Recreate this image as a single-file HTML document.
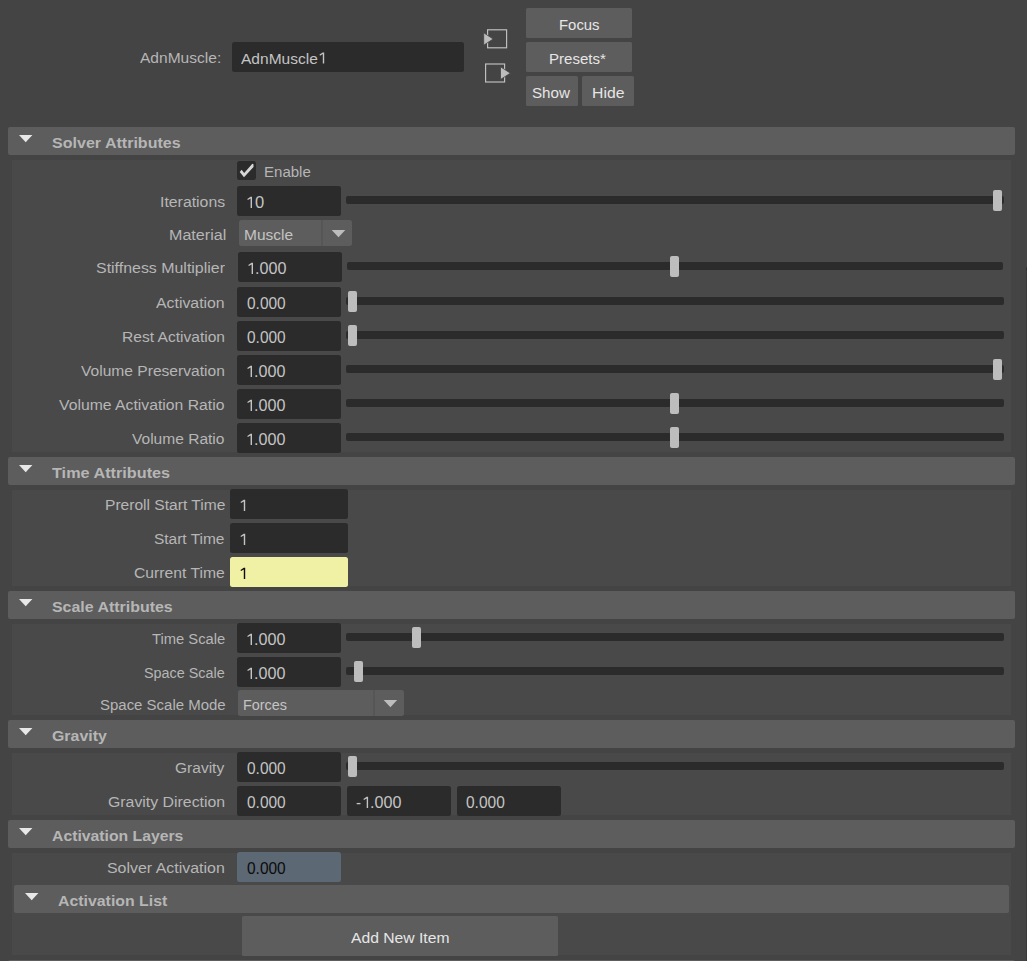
<!DOCTYPE html>
<html><head><meta charset="utf-8"><title>AdnMuscle Attribute Editor</title>
<style>
html,body{margin:0;padding:0;}
body{width:1027px;height:961px;background:#444444;overflow:hidden;position:relative;
font-family:"Liberation Sans",sans-serif;font-size:15.45px;line-height:20px;}
#r{position:absolute;left:0;top:0;width:1027px;height:961px;overflow:hidden;}
#r div,#r svg,#r span{position:absolute;}
#r span{white-space:nowrap;transform-origin:0 0;display:block;}
</style></head><body><div id="r">
<span style="left:140.20px;top:48.00px;color:#b6b6b6;transform:scaleX(1.0072)">AdnMuscle:</span>
<div style="left:232px;top:42px;width:232px;height:30px;background:#2b2b2b;border-radius:2.5px;"></div>
<span style="left:241.41px;top:49.00px;color:#c4c4c4;transform:scaleX(1.0061)">AdnMuscle</span>
<svg style="left:0;top:0" width="1027" height="961"><path d="M322.75 52.40H324.20V63.60H322.80V54.00L320.00 55.70L319.50 54.60Z" fill="#c4c4c4"/></svg>
<svg style="left:0;top:0" width="1027" height="961">
<rect x="487.6" y="29.8" width="19" height="18" fill="none" stroke="#c2c2c2" stroke-width="1.15"/>
<path d="M483.7 32.8V45.2L493.2 39Z" fill="#bdbdbd" stroke="#444444" stroke-width="0.8"/>
<rect x="485.6" y="64" width="19" height="18" fill="none" stroke="#c2c2c2" stroke-width="1.15"/>
<path d="M500.5 66.8V79.5L510.4 73.15Z" fill="#bdbdbd" stroke="#444444" stroke-width="0.8"/>
</svg>
<div style="left:526px;top:8px;width:106px;height:30px;background:#5d5d5d;border-radius:1.5px;"></div>
<span style="left:558.86px;top:15.00px;color:#e6e6e6;transform:scaleX(0.9645)">Focus</span>
<div style="left:526px;top:42px;width:106px;height:30px;background:#5d5d5d;border-radius:1.5px;"></div>
<span style="left:549.09px;top:49.00px;color:#e6e6e6;transform:scaleX(0.9750)">Presets*</span>
<div style="left:526px;top:76px;width:52px;height:30px;background:#5d5d5d;border-radius:1.5px;"></div>
<span style="left:532.32px;top:83.00px;color:#e6e6e6;transform:scaleX(0.9813)">Show</span>
<div style="left:582px;top:76px;width:52px;height:30px;background:#5d5d5d;border-radius:1.5px;"></div>
<span style="left:591.99px;top:83.00px;color:#e6e6e6;transform:scaleX(1.0206)">Hide</span>
<div style="left:1026px;top:267px;width:1px;height:694px;background:#393939;"></div>
<div style="left:1026px;top:268px;width:1px;height:2px;background:#303030;"></div>
<div style="left:8px;top:127px;width:1007px;height:28px;background:#5d5d5d;border-radius:2px;"></div>
<svg style="left:0;top:0" width="1027" height="961"><path d="M19 135H32.4L25.7 142.2Z" fill="#e8e8e8"/></svg>
<span style="left:52.16px;top:133.00px;color:#b6b6b6;font-weight:bold;transform:scaleX(1.0391)">Solver Attributes</span>
<div style="left:12px;top:160px;width:999px;height:292px;background:#494949;"></div>
<div style="left:237px;top:161px;width:19px;height:19px;background:#2b2b2b;border-radius:2.5px;"></div>
<svg style="left:0;top:0" width="1027" height="961"><path d="M239.7 172L241.6 169.7L244.2 173.1L252.3 163.7L253.5 164.3L253.5 166.9L244 177.3Z" fill="#d6d6d6"/></svg>
<span style="left:264.00px;top:162.00px;color:#b6b6b6;transform:scaleX(0.9733)">Enable</span>
<span style="left:159.95px;top:192.00px;color:#b6b6b6;transform:scaleX(1.0257)">Iterations</span>
<div style="left:237px;top:186px;width:104px;height:30px;background:#2b2b2b;border-radius:2.5px;"></div>
<svg style="left:0;top:0" width="1027" height="961"><path d="M250.55 196.80H252.00V208.00H250.60V198.40L247.80 200.10L247.30 199.00Z" fill="#c4c4c4"/></svg>
<span style="left:254.70px;top:192.00px;color:#c4c4c4;font-size:16.2px;transform:scaleX(1.0204)">0</span>
<div style="left:346px;top:196px;width:658px;height:8px;background:#2b2b2b;border-radius:2px;"></div>
<div style="left:993px;top:190px;width:9px;height:21px;background:#bdbdbd;border-radius:2px;"></div>
<span style="left:168.84px;top:225.00px;color:#b6b6b6;transform:scaleX(1.0428)">Material</span>
<div style="left:239px;top:220px;width:113px;height:26px;background:#5d5d5d;border-radius:2.5px;"></div>
<div style="left:321px;top:220px;width:2px;height:26px;background:#565656;"></div>
<span style="left:244.25px;top:225.00px;color:#c4c4c4;transform:scaleX(1.0016)">Muscle</span>
<svg style="left:0;top:0" width="1027" height="961"><path d="M331.7 229.9H345.3L338.5 237.3Z" fill="#bdbdbd"/></svg>
<span style="left:96.46px;top:258.00px;color:#b6b6b6;transform:scaleX(1.0320)">Stiffness Multiplier</span>
<div style="left:238px;top:252px;width:104px;height:30px;background:#2b2b2b;border-radius:2.5px;"></div>
<svg style="left:0;top:0" width="1027" height="961"><path d="M251.55 262.80H253.00V274.00H251.60V264.40L248.80 266.10L248.30 265.00Z" fill="#c4c4c4"/></svg>
<span style="left:254.95px;top:258.00px;color:#c4c4c4;font-size:16.2px;transform:scaleX(0.9978)">.000</span>
<div style="left:347px;top:262px;width:656px;height:8px;background:#2b2b2b;border-radius:2px;"></div>
<div style="left:670px;top:256px;width:9px;height:21px;background:#bdbdbd;border-radius:2px;"></div>
<span style="left:156.21px;top:293.00px;color:#b6b6b6;transform:scaleX(1.0262)">Activation</span>
<div style="left:237px;top:287px;width:104px;height:30px;background:#2b2b2b;border-radius:2.5px;"></div>
<span style="left:246.60px;top:293.00px;color:#c4c4c4;font-size:16.2px;transform:scaleX(0.9552)">0.000</span>
<div style="left:346px;top:297px;width:658px;height:8px;background:#2b2b2b;border-radius:2px;"></div>
<div style="left:348px;top:291px;width:9px;height:21px;background:#bdbdbd;border-radius:2px;"></div>
<span style="left:122.08px;top:327.00px;color:#b6b6b6;transform:scaleX(1.0091)">Rest Activation</span>
<div style="left:237px;top:321px;width:104px;height:30px;background:#2b2b2b;border-radius:2.5px;"></div>
<span style="left:246.60px;top:327.00px;color:#c4c4c4;font-size:16.2px;transform:scaleX(0.9552)">0.000</span>
<div style="left:346px;top:331px;width:658px;height:8px;background:#2b2b2b;border-radius:2px;"></div>
<div style="left:348px;top:325px;width:9px;height:21px;background:#bdbdbd;border-radius:2px;"></div>
<span style="left:81.11px;top:361.00px;color:#b6b6b6;transform:scaleX(1.0097)">Volume Preservation</span>
<div style="left:237px;top:355px;width:104px;height:30px;background:#2b2b2b;border-radius:2.5px;"></div>
<svg style="left:0;top:0" width="1027" height="961"><path d="M250.55 365.80H252.00V377.00H250.60V367.40L247.80 369.10L247.30 368.00Z" fill="#c4c4c4"/></svg>
<span style="left:253.95px;top:361.00px;color:#c4c4c4;font-size:16.2px;transform:scaleX(0.9978)">.000</span>
<div style="left:346px;top:365px;width:658px;height:8px;background:#2b2b2b;border-radius:2px;"></div>
<div style="left:993px;top:359px;width:9px;height:21px;background:#bdbdbd;border-radius:2px;"></div>
<span style="left:59.06px;top:395.00px;color:#b6b6b6;transform:scaleX(1.0204)">Volume Activation Ratio</span>
<div style="left:237px;top:389px;width:104px;height:30px;background:#2b2b2b;border-radius:2.5px;"></div>
<svg style="left:0;top:0" width="1027" height="961"><path d="M250.55 399.80H252.00V411.00H250.60V401.40L247.80 403.10L247.30 402.00Z" fill="#c4c4c4"/></svg>
<span style="left:253.95px;top:395.00px;color:#c4c4c4;font-size:16.2px;transform:scaleX(0.9978)">.000</span>
<div style="left:346px;top:399px;width:658px;height:8px;background:#2b2b2b;border-radius:2px;"></div>
<div style="left:670px;top:393px;width:9px;height:21px;background:#bdbdbd;border-radius:2px;"></div>
<span style="left:132.16px;top:429.00px;color:#b6b6b6;transform:scaleX(1.0071)">Volume Ratio</span>
<div style="left:237px;top:423px;width:104px;height:30px;background:#2b2b2b;border-radius:2.5px;"></div>
<svg style="left:0;top:0" width="1027" height="961"><path d="M250.55 433.80H252.00V445.00H250.60V435.40L247.80 437.10L247.30 436.00Z" fill="#c4c4c4"/></svg>
<span style="left:253.95px;top:429.00px;color:#c4c4c4;font-size:16.2px;transform:scaleX(0.9978)">.000</span>
<div style="left:346px;top:433px;width:658px;height:8px;background:#2b2b2b;border-radius:2px;"></div>
<div style="left:670px;top:427px;width:9px;height:21px;background:#bdbdbd;border-radius:2px;"></div>
<div style="left:8px;top:457px;width:1007px;height:28px;background:#5d5d5d;border-radius:2px;"></div>
<svg style="left:0;top:0" width="1027" height="961"><path d="M19 465H32.4L25.7 472.2Z" fill="#e8e8e8"/></svg>
<span style="left:52.09px;top:463.00px;color:#b6b6b6;font-weight:bold;transform:scaleX(1.0510)">Time Attributes</span>
<div style="left:12px;top:490px;width:999px;height:96px;background:#494949;"></div>
<span style="left:104.85px;top:495.00px;color:#b6b6b6;transform:scaleX(1.0092)">Preroll Start Time</span>
<div style="left:230px;top:489px;width:118px;height:30px;background:#2b2b2b;border-radius:2.5px;"></div>
<svg style="left:0;top:0" width="1027" height="961"><path d="M243.75 499.80H245.20V511.00H243.80V501.40L241.00 503.10L240.50 502.00Z" fill="#c4c4c4"/></svg>
<span style="left:154.24px;top:529.00px;color:#b6b6b6;transform:scaleX(1.0017)">Start Time</span>
<div style="left:230px;top:523px;width:118px;height:30px;background:#2b2b2b;border-radius:2.5px;"></div>
<svg style="left:0;top:0" width="1027" height="961"><path d="M243.75 533.80H245.20V545.00H243.80V535.40L241.00 537.10L240.50 536.00Z" fill="#c4c4c4"/></svg>
<span style="left:133.53px;top:563.00px;color:#b6b6b6;transform:scaleX(1.0175)">Current Time</span>
<div style="left:230px;top:557px;width:118px;height:30px;background:#f1f1a5;border-radius:2.5px;"></div>
<svg style="left:0;top:0" width="1027" height="961"><path d="M243.75 567.80H245.20V579.00H243.80V569.40L241.00 571.10L240.50 570.00Z" fill="#0c0c0c"/></svg>
<div style="left:8px;top:591px;width:1007px;height:28px;background:#5d5d5d;border-radius:2px;"></div>
<svg style="left:0;top:0" width="1027" height="961"><path d="M19 599H32.4L25.7 606.2Z" fill="#e8e8e8"/></svg>
<span style="left:52.16px;top:597.00px;color:#b6b6b6;font-weight:bold;transform:scaleX(1.0317)">Scale Attributes</span>
<div style="left:12px;top:624px;width:999px;height:91px;background:#494949;"></div>
<span style="left:151.68px;top:629.00px;color:#b6b6b6;transform:scaleX(0.9558)">Time Scale</span>
<div style="left:237px;top:623px;width:104px;height:30px;background:#2b2b2b;border-radius:2.5px;"></div>
<svg style="left:0;top:0" width="1027" height="961"><path d="M250.55 633.80H252.00V645.00H250.60V635.40L247.80 637.10L247.30 636.00Z" fill="#c4c4c4"/></svg>
<span style="left:253.95px;top:629.00px;color:#c4c4c4;font-size:16.2px;transform:scaleX(0.9978)">.000</span>
<div style="left:346px;top:633px;width:658px;height:8px;background:#2b2b2b;border-radius:2px;"></div>
<div style="left:412px;top:627px;width:9px;height:21px;background:#bdbdbd;border-radius:2px;"></div>
<span style="left:144.41px;top:663.00px;color:#b6b6b6;transform:scaleX(0.9315)">Space Scale</span>
<div style="left:237px;top:657px;width:104px;height:30px;background:#2b2b2b;border-radius:2.5px;"></div>
<svg style="left:0;top:0" width="1027" height="961"><path d="M250.55 667.80H252.00V679.00H250.60V669.40L247.80 671.10L247.30 670.00Z" fill="#c4c4c4"/></svg>
<span style="left:253.95px;top:663.00px;color:#c4c4c4;font-size:16.2px;transform:scaleX(0.9978)">.000</span>
<div style="left:346px;top:667px;width:658px;height:8px;background:#2b2b2b;border-radius:2px;"></div>
<div style="left:354px;top:661px;width:9px;height:21px;background:#bdbdbd;border-radius:2px;"></div>
<span style="left:99.74px;top:695.00px;color:#b6b6b6;transform:scaleX(0.9695)">Space Scale Mode</span>
<div style="left:238px;top:690px;width:166px;height:26px;background:#5d5d5d;border-radius:2.5px;"></div>
<div style="left:373px;top:690px;width:2px;height:26px;background:#565656;"></div>
<span style="left:243.07px;top:695.00px;color:#c4c4c4;transform:scaleX(0.9334)">Forces</span>
<svg style="left:0;top:0" width="1027" height="961"><path d="M383.6 699.9H397.2L390.4 707.3Z" fill="#bdbdbd"/></svg>
<div style="left:8px;top:720px;width:1007px;height:28px;background:#5d5d5d;border-radius:2px;"></div>
<svg style="left:0;top:0" width="1027" height="961"><path d="M19 728H32.4L25.7 735.2Z" fill="#e8e8e8"/></svg>
<span style="left:52.30px;top:726.00px;color:#b6b6b6;font-weight:bold;transform:scaleX(1.0295)">Gravity</span>
<div style="left:12px;top:753px;width:999px;height:62px;background:#494949;"></div>
<span style="left:174.84px;top:758.00px;color:#b6b6b6;transform:scaleX(1.0064)">Gravity</span>
<div style="left:237px;top:752px;width:104px;height:30px;background:#2b2b2b;border-radius:2.5px;"></div>
<span style="left:246.60px;top:758.00px;color:#c4c4c4;font-size:16.2px;transform:scaleX(0.9552)">0.000</span>
<div style="left:346px;top:762px;width:658px;height:8px;background:#2b2b2b;border-radius:2px;"></div>
<div style="left:348px;top:756px;width:9px;height:21px;background:#bdbdbd;border-radius:2px;"></div>
<span style="left:108.10px;top:792.00px;color:#b6b6b6;transform:scaleX(1.0263)">Gravity Direction</span>
<div style="left:237px;top:786px;width:104px;height:30px;background:#2b2b2b;border-radius:2.5px;"></div>
<span style="left:246.60px;top:792.00px;color:#c4c4c4;font-size:16.2px;transform:scaleX(0.9552)">0.000</span>
<div style="left:347px;top:786px;width:104px;height:30px;background:#2b2b2b;border-radius:2.5px;"></div>
<span style="left:356.12px;top:792.00px;color:#c4c4c4;font-size:16.2px;transform:scaleX(0.9302)">-</span>
<svg style="left:0;top:0" width="1027" height="961"><path d="M366.65 796.80H368.10V808.00H366.70V798.40L363.90 800.10L363.40 799.00Z" fill="#c4c4c4"/></svg>
<span style="left:369.95px;top:792.00px;color:#c4c4c4;font-size:16.2px;transform:scaleX(0.9978)">.000</span>
<div style="left:457px;top:786px;width:104px;height:30px;background:#2b2b2b;border-radius:2.5px;"></div>
<span style="left:465.71px;top:792.00px;color:#c4c4c4;font-size:16.2px;transform:scaleX(0.9566)">0.000</span>
<div style="left:8px;top:820px;width:1007px;height:28px;background:#5d5d5d;border-radius:2px;"></div>
<svg style="left:0;top:0" width="1027" height="961"><path d="M19 828H32.4L25.7 835.2Z" fill="#e8e8e8"/></svg>
<span style="left:51.64px;top:826.00px;color:#b6b6b6;font-weight:bold;transform:scaleX(1.0207)">Activation Layers</span>
<div style="left:12px;top:853px;width:999px;height:102px;background:#494949;"></div>
<span style="left:107.07px;top:858.00px;color:#b6b6b6;transform:scaleX(1.0318)">Solver Activation</span>
<div style="left:237px;top:852px;width:104px;height:30px;background:#5c6874;border-radius:2.5px;"></div>
<span style="left:246.56px;top:858.00px;color:#0c0c0c;font-size:16.2px;transform:scaleX(0.9558)">0.000</span>
<div style="left:14px;top:885px;width:995px;height:28px;background:#5d5d5d;border-radius:2px;"></div>
<svg style="left:0;top:0" width="1027" height="961"><path d="M25 893H38.4L31.7 900.2Z" fill="#e8e8e8"/></svg>
<span style="left:57.59px;top:891.00px;color:#b6b6b6;font-weight:bold;transform:scaleX(1.0278)">Activation List</span>
<div style="left:242px;top:916px;width:316px;height:40px;background:#5d5d5d;border-radius:1.5px;"></div>
<span style="left:350.75px;top:928.00px;color:#e6e6e6;transform:scaleX(1.0153)">Add New Item</span>
<div style="left:8px;top:960px;width:1007px;height:5px;background:#5d5d5d;border-radius:3px;"></div>
</div></body></html>
